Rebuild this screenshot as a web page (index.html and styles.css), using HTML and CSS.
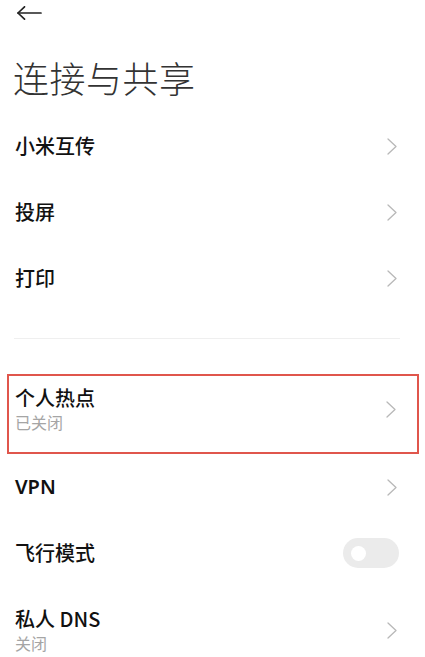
FILE: index.html
```html
<!DOCTYPE html>
<html lang="zh-CN">
<head>
    <meta charset="UTF-8">
    <meta name="viewport" content="width=device-width, initial-scale=1.0">
    <title>连接与共享</title>
    <link rel="stylesheet" href="styles.css">
</head>
<body>
    <header class="topbar">
        <svg class="back" width="26" height="14" viewBox="0 0 26 14">
            <line x1="2" y1="7" x2="25" y2="7" />
            <polyline points="8.5,0.8 2,7 8.5,13.2" />
        </svg>
    </header>
    <h1 class="page-title">连接与共享</h1>

    <main class="settings">
        <div class="row">
            <span class="row-title">小米互传</span>
            <svg class="chevron" width="10" height="17" viewBox="0 0 10 17"><polyline points="1,1 9,8.5 1,16" /></svg>
        </div>
        <div class="row">
            <span class="row-title">投屏</span>
            <svg class="chevron" width="10" height="17" viewBox="0 0 10 17"><polyline points="1,1 9,8.5 1,16" /></svg>
        </div>
        <div class="row">
            <span class="row-title">打印</span>
            <svg class="chevron" width="10" height="17" viewBox="0 0 10 17"><polyline points="1,1 9,8.5 1,16" /></svg>
        </div>

        <hr class="divider">

        <div class="row row-tall highlighted">
            <div class="row-text">
                <span class="row-title">个人热点</span>
                <span class="row-sub">已关闭</span>
            </div>
            <svg class="chevron" width="10" height="17" viewBox="0 0 10 17"><polyline points="1,1 9,8.5 1,16" /></svg>
        </div>
        <div class="row">
            <span class="row-title latin">VPN</span>
            <svg class="chevron" width="10" height="17" viewBox="0 0 10 17"><polyline points="1,1 9,8.5 1,16" /></svg>
        </div>
        <div class="row">
            <span class="row-title">飞行模式</span>
            <span class="switch"><span class="knob"></span></span>
        </div>
        <div class="row row-tall">
            <div class="row-text">
                <span class="row-title">私人 DNS</span>
                <span class="row-sub">关闭</span>
            </div>
            <svg class="chevron" width="10" height="17" viewBox="0 0 10 17"><polyline points="1,1 9,8.5 1,16" /></svg>
        </div>
    </main>
</body>
</html>
```

FILE: styles.css
```css
/* General Styles */
body {
    font-family: "Noto Sans CJK SC", "Noto Sans", sans-serif;
    margin: 0;
    padding: 0;
    background-color: #ffffff;
    color: #111;
    overflow: hidden;
}

/* Header */
.topbar {
    height: 26px;
    padding: 6px 0 0 16px;
    box-sizing: border-box;
}

.back {
    display: block;
    fill: none;
    stroke: #222;
    stroke-width: 1.7;
    stroke-linecap: round;
    stroke-linejoin: round;
}

.page-title {
    margin: 31px 0 0 13px;
    height: 40px;
    line-height: 40px;
    font-size: 36px;
    font-weight: 300;
    color: #333;
    letter-spacing: 0.5px;
}

/* List */
.settings {
    margin: 16px 27px 0 15px;
}

.row {
    display: flex;
    align-items: center;
    justify-content: space-between;
    height: 66px;
}

.row-title {
    font-size: 20px;
    font-weight: 500;
    color: #111;
    line-height: 26px;
}

.row-title.latin {
    font-family: "Noto Sans", sans-serif;
    font-weight: 600;
}

.row-text {
    display: flex;
    flex-direction: column;
}

.row-sub {
    font-size: 16px;
    color: #a5a5a5;
    line-height: 23px;
}

.row-tall {
    height: 92px;
    padding-bottom: 4px;
    box-sizing: border-box;
}

.chevron {
    fill: none;
    stroke: #b8b8b8;
    stroke-width: 1.3;
    stroke-linecap: round;
    stroke-linejoin: round;
    margin-right: 1px;
}

.divider {
    border: none;
    border-top: 1px solid #efefef;
    margin: 27px -2px 35px -1px;
}

/* Highlight box round the hotspot row */
.highlighted {
    height: 80px;
    border: 2px solid #e0564c;
    margin: 0 -21px 0 -8px;
    padding: 0 20px 10px 6px;
}

/* Switch */
.switch {
    width: 56px;
    height: 30px;
    border-radius: 15px;
    background-color: #ebebeb;
    display: flex;
    align-items: center;
    margin-right: -1px;
}

.knob {
    width: 15px;
    height: 15px;
    border-radius: 50%;
    background-color: #ffffff;
    margin-left: 8px;
}
```
